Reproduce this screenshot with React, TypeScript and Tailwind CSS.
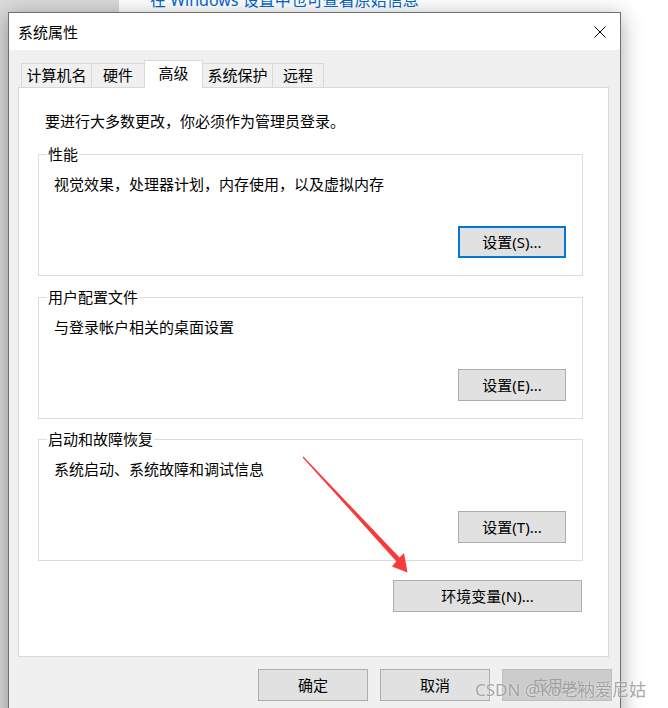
const font = "font-['Noto_Sans','Noto_Sans_CJK_SC',sans-serif]"

function Button({
  label,
  className = '',
  focused = false,
  disabled = false,
}: {
  label: string
  className?: string
  focused?: boolean
  disabled?: boolean
}) {
  const look = disabled
    ? 'bg-[#cccccc] border border-[#bfbfbf] text-[#a0a0a0]'
    : focused
      ? 'bg-[#e1e1e1] border-2 border-[#0078d7]'
      : 'bg-[#e1e1e1] border border-[#adadad]'
  return (
    <div className={`flex h-[32px] items-center justify-center text-[15px] leading-[20px] ${look} ${className}`}>
      {label}
    </div>
  )
}

function Group({
  title,
  desc,
  button,
  focused = false,
  className = '',
}: {
  title: string
  desc: string
  button: string
  focused?: boolean
  className?: string
}) {
  return (
    <div className={`relative flex h-[122px] flex-col border border-[#dcdcdc] ${className}`}>
      {/* legend sits on the top border */}
      <span className="absolute left-[8px] top-[-11px] bg-white px-[1px] text-[15px] leading-[20px]">{title}</span>
      <div className="pl-[15px] pt-[19px] text-[15px] leading-[20px]">{desc}</div>
      <Button label={button} focused={focused} className="mr-[16px] mt-[32px] w-[108px] self-end" />
    </div>
  )
}

const tabs = [
  { label: '计算机名', w: 'w-[71px]' },
  { label: '硬件', w: 'w-[54px]' },
  { label: '高级', w: 'w-[59px]', active: true },
  { label: '系统保护', w: 'w-[71px]' },
  { label: '远程', w: 'w-[52px]' },
]

export default function App() {
  return (
    <div className={`relative h-[708px] w-[668px] overflow-hidden bg-white text-black ${font}`}>
      {/* page behind the dialog */}
      <div className="flex h-full">
        <div className="w-[119px] bg-[#dadada]" />
        <div className="flex-1 pl-[31px]">
          <div className="mt-[-10px] whitespace-nowrap text-[16px] leading-[20px] text-[#0066cc]">
            在 Windows 设置中也可查看原始信息
          </div>
        </div>
      </div>

      {/* dialog window */}
      <div className="absolute left-[8px] top-[12px] flex h-[720px] w-[613px] flex-col border border-[#707070] bg-[#f0f0f0] shadow-[0_4px_20px_rgba(0,0,0,0.35)]">
        <div className="flex h-[37px] items-center justify-between bg-white pl-[9px] pr-[14px]">
          <span className="text-[15px] leading-[20px]">系统属性</span>
          <svg width="12" height="12" viewBox="0 0 12 12">
            <path d="M0.5 0.5L11.5 11.5M11.5 0.5L0.5 11.5" stroke="#000" strokeWidth="1" />
          </svg>
        </div>

        {/* tab strip */}
        <div className="flex h-[37px] items-end pl-[12px]">
          {tabs.map((t, i) =>
            t.active ? (
              <div
                key={t.label}
                className={`relative z-10 -mb-px flex h-[28px] items-start justify-center border border-b-0 border-[#d9d9d9] bg-white pt-[2px] text-[15px] leading-[20px] ${t.w} ${i > 0 ? '-ml-px' : ''}`}
              >
                {t.label}
              </div>
            ) : (
              <div
                key={t.label}
                className={`flex h-[24px] items-start justify-center border border-b-0 border-[#d9d9d9] pt-[1px] text-[15px] leading-[20px] ${t.w} ${i > 0 ? '-ml-px' : ''}`}
              >
                {t.label}
              </div>
            ),
          )}
        </div>

        {/* tab page */}
        <div className="ml-[9px] flex h-[570px] w-[591px] flex-col border border-[#d9d9d9] bg-white pl-[19px] pr-[25px]">
          <div className="ml-[7px] pt-[23px] text-[15px] leading-[20px]">要进行大多数更改，你必须作为管理员登录。</div>
          <Group className="mt-[23px]" title="性能" desc="视觉效果，处理器计划，内存使用，以及虚拟内存" button="设置(S)..." focused />
          <Group className="mt-[21px]" title="用户配置文件" desc="与登录帐户相关的桌面设置" button="设置(E)..." />
          <Group className="mt-[20px]" title="启动和故障恢复" desc="系统启动、系统故障和调试信息" button="设置(T)..." />
          <Button label="环境变量(N)..." className="mr-[1px] mt-[19px] w-[189px] self-end" />
        </div>

        <div className="mt-[12px] flex justify-end gap-[12px] pr-[8px]">
          <Button label="确定" className="w-[110px]" />
          <Button label="取消" className="w-[110px]" />
          <Button label="应用(A)" disabled className="w-[110px]" />
        </div>
      </div>

      {/* annotation arrow */}
      <svg className="pointer-events-none absolute left-0 top-0" width="668" height="708" viewBox="0 0 668 708">
        <polygon
          points="302.6,457.4 303.4,456.6 399.6,557.4 404,553 407.5,572.5 392,566.5 396.2,561.2"
          fill="#f73b3b"
        />
      </svg>

      {/* watermark */}
      <div className="pointer-events-none absolute left-[475px] top-[678px] whitespace-nowrap text-[17px] leading-[24px] text-[rgba(130,130,130,0.7)] [text-shadow:0_0_2px_rgba(255,255,255,0.9)]">
        CSDN @Ko老衲爱尼姑
      </div>
    </div>
  )
}
